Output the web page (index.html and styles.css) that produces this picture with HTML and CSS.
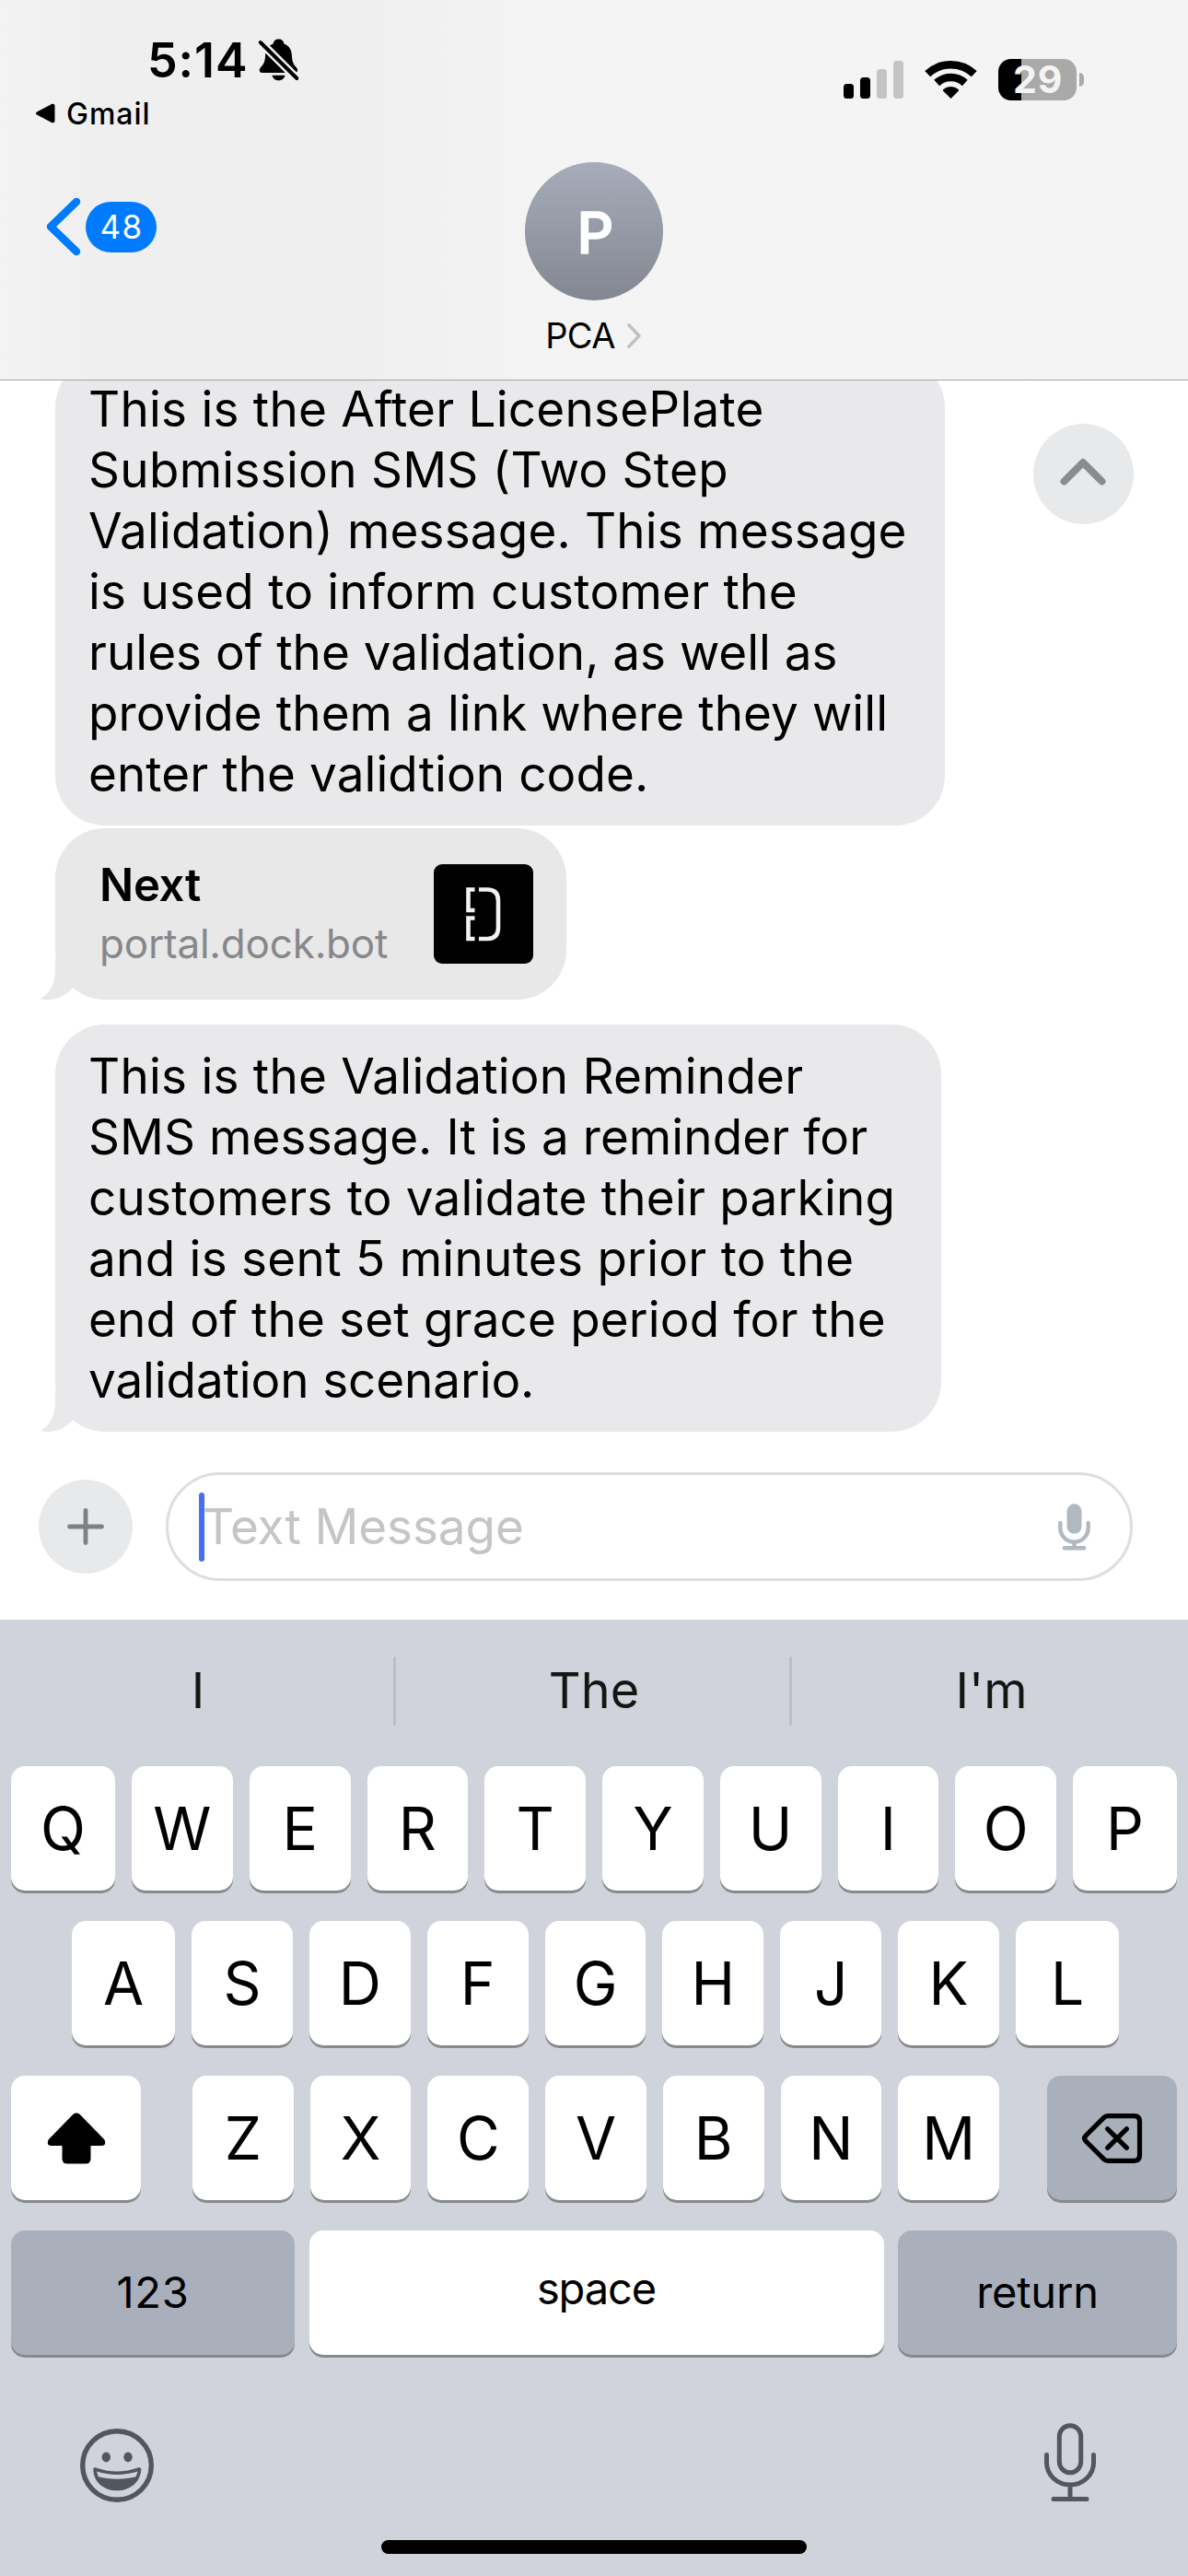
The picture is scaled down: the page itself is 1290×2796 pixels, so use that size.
FILE: index.html
```html
<!DOCTYPE html>
<html lang="en">
<head>
<meta charset="utf-8">
<title>PCA</title>
<link rel="stylesheet" href="styles.css">
</head>
<body>
<main class="phone">
  <header class="header">
    <div class="status">
      <div class="status-left">
        <div class="clock">
          <span class="time">5:14</span>
          <svg class="bell" viewBox="0 0 43 46" width="43" height="46">
            <path d="M21.5 0.5C25.2 0.5 26.8 2.6 27.4 5.4C33 7.6 35.600 12 35.900 18C36.200 25 37.600 27.600 40.600 31C41.800 32.400 42.300 33.400 42 34.800C41.700 36.200 40.700 37 39 37H4C2.200 37 1 36.200 0.800 34.800C0.600 33.400 1 32.400 2.200 31C5.400 27.600 6.800 25 7.100 18C7.400 12 10 7.600 15.600 5.400C16.200 2.600 17.800 0.500 21.500 0.500Z"/>
            <path d="M14.500 39.800H28.500C27.800 43.200 25.200 45.300 21.500 45.300C17.800 45.300 15.200 43.200 14.500 39.800Z"/>
            <path class="bell-gap" d="M-1 1L43.500 45.300"/>
            <path class="bell-slash" d="M1.800 4L41.300 43"/>
          </svg>
        </div>
        <div class="back-app">
          <svg viewBox="0 0 22 22" width="22" height="22"><path d="M2 9.400L18.500 0.800Q21.500 0 21.500 3V19Q21.500 22 18.500 21.200L2 12.600Q0 11 2 9.400Z"/></svg>
          <span>Gmail</span>
        </div>
      </div>
      <div class="status-right">
        <svg class="signal" viewBox="0 0 65 41" width="65" height="41">
          <rect x="0" y="25" width="11" height="16" rx="3.500"/>
          <rect x="18" y="18" width="11" height="23" rx="3.500"/>
          <rect class="dim" x="36" y="9" width="11" height="32" rx="3.500"/>
          <rect class="dim" x="54" y="0" width="11" height="41" rx="3.500"/>
        </svg>
        <svg class="wifi" viewBox="0 0 57 42" width="57" height="42">
          <path d="M28.500 42L20.200 33.700Q19.400 32.800 20.300 32A12.600 12.600 0 0 1 36.700 32Q37.600 32.800 36.800 33.700Z"/>
          <path class="arc" d="M13.200 25A22.500 22.500 0 0 1 43.800 25"/>
          <path class="arc" d="M3.200 15.200A37 37 0 0 1 53.800 15.200"/>
        </svg>
        <div class="battery"><span class="battery-level">29</span><i class="battery-cap"></i></div>
      </div>
    </div>
    <nav class="nav">
      <div class="back">
        <svg viewBox="0 0 38 64" width="38" height="64"><path d="M33 5L5 32L33 59"/></svg>
        <span class="unread">48</span>
      </div>
      <div class="contact">
        <svg class="avatar" viewBox="0 0 150 150" width="150" height="150">
          <defs><linearGradient id="ag" x1="0" y1="0" x2="0" y2="1"><stop offset="0" stop-color="#a6acba"/><stop offset="1" stop-color="#848791"/></linearGradient></defs>
          <circle cx="75" cy="75" r="75" fill="url(#ag)"/>
          <text x="76.500" y="99" text-anchor="middle">P</text>
        </svg>
        <div class="contact-name"><span>PCA</span>
          <svg viewBox="0 0 15 27" width="15" height="27"><path d="M1.800 1.800L13 13.500L1.800 25.200"/></svg>
        </div>
      </div>
    </nav>
  </header>

  <section class="thread">
    <div class="bubble first">
      <p class="wide">This is the After LicensePlate</p>
      <p class="wider">Submission SMS (Two Step</p>
      <p class="mid">Validation) message. This message</p>
      <p class="wide">is used to inform customer the</p>
      <p>rules of the validation, as well as</p>
      <p class="slight">provide them a link where they will</p>
      <p class="slight">enter the validtion code.</p>
    </div>
    <div class="bubble card">
      <div class="card-text">
        <strong>Next</strong>
        <span>portal.dock.bot</span>
      </div>
      <svg class="card-icon" viewBox="0 0 108 108" width="108" height="108">
        <rect width="108" height="108" rx="9"/>
        <path d="M44.500 27.500H37.500V50H44.500M44.500 58.500H37.500V81H44.500M49 27.500H58Q70 27.500 70 39.500V69Q70 81 58 81H49"/>
      </svg>
      <svg class="tail" viewBox="0 0 44 44" width="44" height="44"><path d="M17 0V10C17 26 12 37 0.500 43.300C14 46 26 42 36 31.500L44 20V0Z"/></svg>
    </div>
    <div class="bubble last">
      <p class="wide">This is the Validation Reminder</p>
      <p class="slight">SMS message. It is a reminder for</p>
      <p class="wide">customers to validate their parking</p>
      <p class="wider">and is sent 5 minutes prior to the</p>
      <p class="mid">end of the set grace period for the</p>
      <p class="tight">validation scenario.</p>
      <svg class="tail" viewBox="0 0 44 44" width="44" height="44"><path d="M17 0V10C17 26 12 37 0.500 43.300C14 46 26 42 36 31.500L44 20V0Z"/></svg>
    </div>
    <div class="jump">
      <svg viewBox="0 0 50 30" width="50" height="30"><path d="M4.500 25.500L25 5L45.500 25.500"/></svg>
    </div>
  </section>

  <section class="composer">
    <div class="plus"><svg viewBox="0 0 40 40" width="40" height="40"><path d="M20 2.500V37.500M2.500 20H37.500"/></svg></div>
    <div class="field">
      <i class="caret"></i><span>Text Message</span>
      <svg viewBox="0 0 35 51" width="35" height="51">
        <rect class="fill" x="9.500" y="0.300" width="16" height="32.500" rx="8"/>
        <path d="M2.300 21V26.500A15.200 15.200 0 0 0 32.700 26.500V21M17.500 42V48"/>
        <path d="M7 48.300H28"/>
      </svg>
    </div>
  </section>

  <section class="keyboard">
    <div class="suggestions"><span>I</span><i></i><span>The</span><i></i><span>I'm</span></div>
    <div class="row top"><b>Q</b><b>W</b><b>E</b><b>R</b><b>T</b><b>Y</b><b>U</b><b>I</b><b>O</b><b>P</b></div>
    <div class="row home"><b>A</b><b>S</b><b>D</b><b>F</b><b>G</b><b>H</b><b>J</b><b>K</b><b>L</b></div>
    <div class="row lower">
      <b class="shift"><svg viewBox="0 0 64 56" width="64" height="56"><path d="M28.500 1.800Q32 -1 35.500 1.800L62.500 29.500Q65 35.600 59.500 36H47.500V50Q47.500 55.500 42 55.500H22Q16.500 55.500 16.500 50V36H4.500Q-1 35.600 1.500 29.500Z"/></svg></b>
      <b>Z</b><b>X</b><b>C</b><b>V</b><b>B</b><b>N</b><b>M</b>
      <b class="grey delete"><svg viewBox="0 0 66 54" width="66" height="54"><path d="M28 2.700H56.500Q62.500 2.700 62.500 8.700V45.300Q62.500 51.300 56.500 51.300H28Q25.500 51.300 23.500 49.300L4 30Q1.200 27 4 24L23.500 4.700Q25.500 2.700 28 2.700Z"/><path d="M27.500 16.700L48.500 37.300M48.500 16.700L27.500 37.300"/></svg></b>
    </div>
    <div class="row bottom"><b class="grey num">123</b><b class="space">space</b><b class="grey return">return</b></div>
    <div class="dock">
      <svg class="emoji" viewBox="0 0 80 80" width="80" height="80">
        <circle class="ring" cx="40" cy="40" r="37.300"/>
        <ellipse cx="28.300" cy="31" rx="4.700" ry="5.400"/>
        <ellipse cx="52" cy="31" rx="4.700" ry="5.400"/>
        <path fill-rule="evenodd" d="M16.500 42.300C32 48 48 48 63.500 42.300Q66.500 42 66.300 45C65 58.500 54 67.300 40 67.300C26 67.300 15 58.500 14.300 45Q13.900 42 16.500 42.300ZM18 46.500L19.800 52.300C32 55.600 48 55.600 60.600 52.300L62.500 46.500C48 51 32 51 18 46.500Z"/>
      </svg>
      <svg class="dictate" viewBox="0 0 56 86" width="56" height="86">
        <rect x="16.300" y="2.800" width="23.400" height="51" rx="11.700"/>
        <path d="M2.500 34.500V43A25.500 24 0 0 0 53.500 43V34.500M28 67V81M10 82.500H46"/>
      </svg>
    </div>
    <div class="home-bar"></div>
  </section>
</main>
</body>
</html>
```
FILE: styles.css
```css
* { box-sizing: border-box; }

body {
  margin: 0;
  background: #fff;
  color: #000;
  font-family: Inter, "Liberation Sans", sans-serif;
}

p { margin: 0; }
svg { display: block; flex: none; overflow: visible; }

.phone {
  width: 1290px;
  height: 2796px;
  display: flex;
  flex-direction: column;
  overflow: hidden;
}

/* Status bar and contact header */
.header {
  height: 413px;
  flex: none;
  border-bottom: 1px solid #a3a3a5;
  background: linear-gradient(90deg, #f3f3f3 0, #efefef 110px, #efefef 380px, #f4f4f4 600px, #f4f4f4 1100px, #f3f3f3 100%);
}

.status { height: 176px; display: flex; justify-content: space-between; }
.status-left { padding: 34px 0 0 38px; }

.clock { display: flex; align-items: center; height: 62px; padding-left: 122px; }
.time { width: 121px; font-size: 52px; font-weight: 600; line-height: 62px; letter-spacing: 0.9px; padding-top: 1px; }
.bell-gap { stroke: #efefef; stroke-width: 9; }
.bell-slash { stroke: #000; stroke-width: 4; stroke-linecap: round; }

.back-app {
  display: flex;
  align-items: center;
  gap: 12px;
  height: 40px;
  margin-top: 7px;
  font-size: 32px;
  font-weight: 500;
  letter-spacing: 1px;
}

.status-right { display: flex; align-items: flex-start; padding: 64px 113px 0 0; }
.signal { margin-top: 2px; }
.signal .dim { fill: #c4c4c4; }
.wifi { margin: 1px 23px 0; }
.wifi .arc { fill: none; stroke: #000; stroke-width: 8.600; }

.battery { display: flex; align-items: center; gap: 3px; }
.battery-level {
  width: 85px;
  height: 45px;
  border-radius: 14px;
  background: linear-gradient(90deg, #000 25px, #a9a9a9 25px);
  color: #f4f4f4;
  font-size: 41px;
  font-weight: 700;
  line-height: 45px;
  letter-spacing: 1px;
  padding-left: 16px;
}
.battery-cap { width: 5px; height: 15px; border-radius: 0 5px 5px 0; background: #a9a9a9; }

.nav { display: grid; grid-template-columns: 1fr 150px 1fr; }
.back { display: flex; align-items: center; gap: 5px; height: 64px; margin: 38px 0 0 50px; }
.back path { fill: none; stroke: #007aff; stroke-width: 8.500; stroke-linecap: round; stroke-linejoin: round; }
.unread {
  width: 77px;
  height: 55px;
  border-radius: 28px;
  background: #007aff;
  color: #fff;
  font-size: 35px;
  line-height: 55px;
  letter-spacing: 1.4px;
  text-align: center;
  padding-left: 1px;
}

.contact { display: flex; flex-direction: column; align-items: center; }
.avatar text {
  font-size: 62px;
  font-weight: 500;
  fill: #fff;
  stroke: #fff;
  stroke-width: 1.500;
  stroke-linejoin: round;
}
.contact-name {
  display: flex;
  align-items: center;
  gap: 13px;
  height: 46px;
  margin: 15px 2px 0 0;
  font-size: 38px;
  letter-spacing: -0.6px;
}
.contact-name path { fill: none; stroke: #c0c0c2; stroke-width: 3.400; stroke-linecap: round; stroke-linejoin: round; }

/* Conversation */
.thread {
  position: relative;
  height: 1185px;
  flex: none;
  overflow: hidden;
  padding-left: 60px;
  display: flex;
  flex-direction: column;
  align-items: flex-start;
}

.bubble {
  position: relative;
  flex: none;
  border-radius: 54px;
  background: #e9e9eb;
  padding: 23px 36px;
  font-size: 53px;
  line-height: 66px;
  white-space: nowrap;
}
.bubble.first { width: 966px; margin-top: -25px; }
.bubble.last { width: 962px; margin-top: 27px; }
.bubble .tight { letter-spacing: -0.1px; }
.bubble .slight { letter-spacing: 0.08px; }
.bubble .mid { letter-spacing: 0.16px; }
.bubble .wide { letter-spacing: 0.23px; }
.bubble .wider { letter-spacing: 0.28px; }

.bubble.card {
  width: 555px;
  height: 186px;
  margin-top: 3px;
  padding: 0 36px 0 48px;
  background: #e8e8e8;
  display: flex;
  align-items: center;
  justify-content: space-between;
}
.card-text { display: flex; flex-direction: column; }
.card-text strong { font-size: 49px; font-weight: 600; line-height: 64px; letter-spacing: -0.3px; }
.card-text span { font-size: 44px; line-height: 62px; letter-spacing: -0.2px; color: #87878b; }
.card-icon path { fill: none; stroke: #f2f2f2; stroke-width: 4.600; }

.tail { position: absolute; left: -17px; bottom: 0; fill: #e9e9eb; }
.card .tail { fill: #e8e8e8; }

.jump {
  position: absolute;
  top: 47px;
  right: 59px;
  width: 109px;
  height: 109px;
  border-radius: 50%;
  background: #e8e9ea;
  display: flex;
  align-items: center;
  justify-content: center;
}
.jump path { fill: none; stroke: #8a8a91; stroke-width: 8; stroke-linecap: round; stroke-linejoin: round; }
.jump svg { margin: 0 1px 5px 0; }

/* Composer */
.composer {
  height: 160px;
  flex: none;
  display: flex;
  align-items: flex-start;
  padding: 0 60px 0 42px;
  gap: 36px;
}
.plus {
  width: 102px;
  height: 102px;
  margin-top: 8px;
  border-radius: 50%;
  background: #e8e9eb;
  display: flex;
  align-items: center;
  justify-content: center;
}
.plus path { stroke: #7e8088; stroke-width: 4.800; stroke-linecap: round; }
.field {
  flex: 1;
  height: 118px;
  border: 3px solid #dedede;
  border-radius: 59px;
  display: flex;
  align-items: center;
  padding: 0 43px 0 33px;
  font-size: 53px;
  letter-spacing: -0.1px;
  color: #c5c5c7;
}
.field span { flex: 1; margin-left: -2px; }
.caret { position: relative; width: 6px; height: 75px; border-radius: 3px; background: #466ff2; }
.field svg .fill { fill: #b2b8bf; }
.field svg path { fill: none; stroke: #b2b8bf; stroke-width: 4.400; stroke-linecap: round; }

/* Keyboard */
.keyboard {
  flex: 1;
  background: #d0d3db;
  display: flex;
  flex-direction: column;
}
.suggestions {
  height: 159px;
  flex: none;
  display: grid;
  grid-template-columns: 427px 3px 427px 3px 1fr;
  align-items: center;
  padding-bottom: 5px;
  font-size: 54px;
  color: #151613;
}
.suggestions span { text-align: center; line-height: 66px; padding-left: 3px; }
.suggestions i { height: 75px; border-radius: 2px; background: #bbbec3; }

.row { display: flex; gap: 18px; height: 135px; flex: none; padding: 0 12px; margin-bottom: 33px; }
.row b {
  flex: 1;
  border-radius: 15px;
  background: #fff;
  box-shadow: 0 3px 0 #88898d;
  font-size: 64px;
  font-weight: 400;
  line-height: 135px;
  display: flex;
  align-items: center;
  justify-content: center;
}
.row b.grey { background: #a9afbb; }
.row.top b:first-child, .row.top b:last-child { flex: 0 0 113px; }
.row.home { padding: 0 75px 0 78px; }
.row.home b:first-child, .row.home b:last-child { flex: 0 0 112px; }
.row b.shift { flex: 0 0 141px; margin-right: 38px; }
.row b.delete { flex: 0 0 141px; margin-left: 34px; }
.delete path { fill: none; stroke: #000; stroke-width: 5.200; stroke-linecap: round; stroke-linejoin: round; }
.row.bottom { gap: 15.500px; margin-bottom: 0; }
.row.bottom b { font-size: 47px; padding-bottom: 2px; }
.row.bottom b.num { flex: 0 0 308px; letter-spacing: 0.8px; }
.row.bottom b.space { letter-spacing: -1.1px; padding-bottom: 10px; }
.row.bottom b.return { flex: 0 0 303px; letter-spacing: -0.2px; }

.dock {
  display: flex;
  justify-content: space-between;
  padding: 74px 100px 0 87px;
  height: 201px;
  flex: none;
  color: #51565f;
}
.emoji { margin-top: 6px; fill: currentColor; }
.emoji .ring { fill: none; stroke: currentColor; stroke-width: 5.400; }
.dictate { fill: none; stroke: currentColor; stroke-width: 5; stroke-linecap: round; }

.home-bar { width: 462px; height: 15px; flex: none; border-radius: 8px; background: #000; margin: 0 auto; }
```
